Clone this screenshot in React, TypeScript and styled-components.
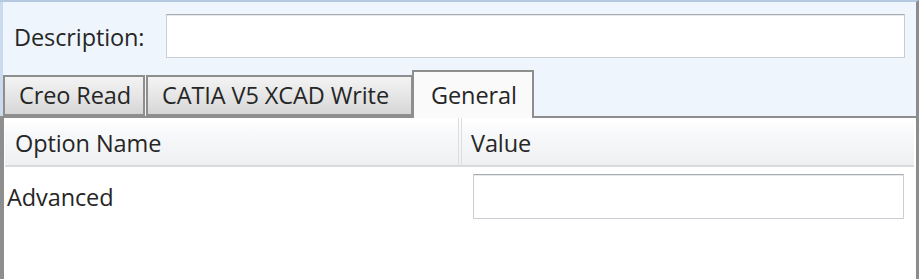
import React from "react";
import styled, { createGlobalStyle } from "styled-components";

const Global = createGlobalStyle`
  html, body { margin: 0; padding: 0; background: #ffffff; }
  body { font-family: "Open Sans", "Noto Sans", sans-serif; }
`;

const Window = styled.div`
  width: 919px;
  height: 279px;
  box-sizing: border-box;
  border-top: 2px solid #b4c8e0;
  border-right: 3px solid #8c8c8c;
  display: flex;
  flex-direction: column;
  font-family: "Open Sans", "Noto Sans", sans-serif;
  font-size: 23.5px;
  letter-spacing: -0.1px;
  color: #262626;
  overflow: hidden;
`;

const TopPanel = styled.div`
  background: #eef5fd;
  border-left: 3px solid #cbdbee;
  padding-top: 12px;
  display: flex;
  flex-direction: column;
`;

const DescRow = styled.div`
  display: flex;
  align-items: center;
  padding: 0 11px 0 11px;
  height: 44px;
`;

const Label = styled.span`
  width: 152px;
  flex: none;
  line-height: 1;
  padding-top: 3px;
`;

const TextBox = styled.div<{ $h: number }>`
  flex: 1;
  height: ${(p) => p.$h}px;
  box-sizing: border-box;
  background: #ffffff;
  border: 1px solid #c9ced6;
  border-top-color: #a8acb3;
  box-shadow: inset 0 1px 0 #e6e8eb;
`;

const TabStrip = styled.div`
  display: flex;
  align-items: flex-end;
  margin-top: 12px;
  padding-left: 2px;
  height: 46px;
  border-bottom: 2px solid #8e8e8e;
  margin-left: -3px;
`;

const Tab = styled.div<{ $active?: boolean; $w: number }>`
  width: ${(p) => p.$w}px;
  box-sizing: border-box;
  height: ${(p) => (p.$active ? 48 : 41)}px;
  margin-bottom: ${(p) => (p.$active ? -2 : 0)}px;
  margin-left: ${(p) => (p.$active ? -1 : 1)}px;
  border: 2px solid #8e8e8e;
  border-bottom: ${(p) => (p.$active ? "none" : "2px solid #8e8e8e")};
  background: ${(p) =>
    p.$active ? "#fafafa" : "linear-gradient(#f3f3f3, #e6e6e6 50%, #d6d6d6)"};
  display: flex;
  align-items: center;
  padding-left: ${(p) => (p.$active ? 17 : 14)}px;
  padding-top: ${(p) => (p.$active ? 2 : 0)}px;
  line-height: 1;
  white-space: nowrap;
  position: relative;
  z-index: ${(p) => (p.$active ? 1 : 0)};
`;

const Content = styled.div`
  flex: 1;
  background: #ffffff;
  border-left: 4px solid #8e8e8e;
  display: flex;
  flex-direction: column;
`;

const HeaderRow = styled.div`
  display: grid;
  grid-template-columns: 453px 1fr;
  margin: 0 2px 0 1px;
  height: 49px;
  box-sizing: border-box;
  background: linear-gradient(#ffffff, #f7f8f9 40%, #eff0f2);
  border-bottom: 2px solid #d9dadc;
`;

const HeaderCell = styled.div<{ $divider?: boolean }>`
  display: flex;
  align-items: center;
  padding-left: ${(p) => (p.$divider ? 9 : 10)}px;
  padding-top: 4px;
  border-left: ${(p) => (p.$divider ? "4px double #dcdde0" : "none")};
  line-height: 1;
`;

const DataRow = styled.div`
  display: grid;
  grid-template-columns: 469px 1fr;
  padding-top: 7px;
`;

const NameCell = styled.div`
  padding-left: 3px;
  display: flex;
  align-items: center;
  line-height: 1;
  padding-top: 2px;
`;

const ValueCell = styled.div`
  padding-right: 12px;
  display: flex;
`;

export default function App() {
  return (
    <>
      <Global />
      <Window>
        <TopPanel>
          <DescRow>
            <Label>Description:</Label>
            <TextBox $h={44} />
          </DescRow>
          <TabStrip>
            <Tab $w={142}>Creo Read</Tab>
            <Tab $w={267}>CATIA V5 XCAD Write</Tab>
            <Tab $w={122} $active>
              General
            </Tab>
          </TabStrip>
        </TopPanel>
        <Content>
          <HeaderRow>
            <HeaderCell>Option Name</HeaderCell>
            <HeaderCell $divider>Value</HeaderCell>
          </HeaderRow>
          <DataRow>
            <NameCell>Advanced</NameCell>
            <ValueCell>
              <TextBox $h={45} />
            </ValueCell>
          </DataRow>
        </Content>
      </Window>
    </>
  );
}
